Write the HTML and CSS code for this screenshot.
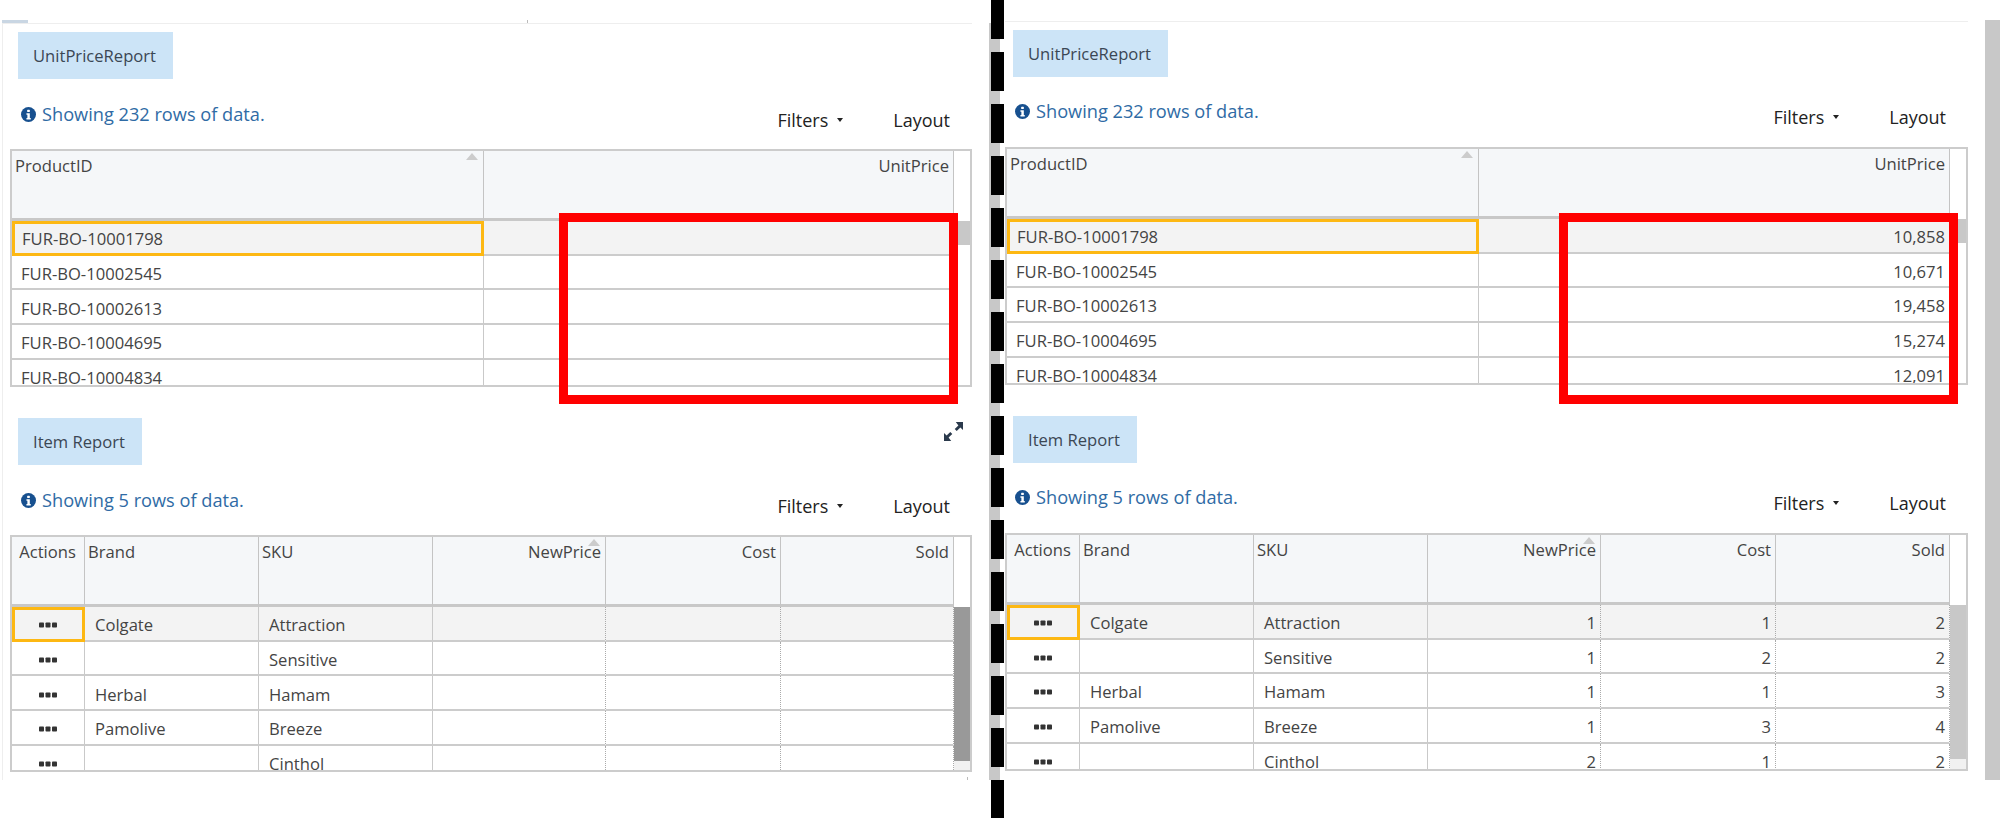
FILE: index.html

```html
<!DOCTYPE html>
<html lang="en">
<head>
  <meta charset="UTF-8" />
  <title>UnitPriceReport before and after</title>
  <link rel="stylesheet" href="styles.css">
</head>
<body>
  <svg class="defs" width="0" height="0">
    <symbol id="info" viewBox="0 0 16 16">
      <circle cx="8" cy="8" r="8" fill="#17508f"/>
      <rect x="6.6" y="2.8" width="2.8" height="2.6" rx="0.6" fill="#fff"/>
      <path d="M5.8 6.6h3.6v5h1v1.7H5.8v-1.7h1v-3.3h-1z" fill="#fff"/>
    </symbol>
    <symbol id="dots" viewBox="0 0 18 6">
      <rect x="0" y="0.5" width="5" height="5" rx="0.8"/>
      <rect x="6.5" y="0.5" width="5" height="5" rx="0.8"/>
      <rect x="13" y="0.5" width="5" height="5" rx="0.8"/>
    </symbol>
  </svg>

  <main class="page">

    <section class="pane pane-before">
      <div class="sheet">
        <span class="tab-mark"></span>
        <span class="top-tick"></span>
        <span class="bottom-tick"></span>

        <div class="report report-first">
          <div class="report-head">
            <h2 class="chip">UnitPriceReport</h2>
          </div>
          <div class="toolbar">
            <p class="info"><svg class="info-icon"><use href="#info"/></svg>Showing 232 rows of data.</p>
            <div class="tools"><span class="filters">Filters</span><span class="caret"></span><span class="layout">Layout</span></div>
          </div>
          <div class="frame">
            <div class="grid cols-price">
              <div class="th">ProductID<span class="sort"></span></div>
              <div class="th right">UnitPrice</div>

              <div class="td first sel focus">FUR-BO-10001798</div>
              <div class="td right sel"></div>
              <div class="td first">FUR-BO-10002545</div>
              <div class="td right"></div>
              <div class="td first">FUR-BO-10002613</div>
              <div class="td right"></div>
              <div class="td first">FUR-BO-10004695</div>
              <div class="td right"></div>
              <div class="td first">FUR-BO-10004834</div>
              <div class="td right"></div>
            </div>
            <div class="scroll"><div class="thumb thumb-short"></div></div>
          </div>
        </div>

        <div class="report">
          <div class="report-head">
            <h2 class="chip">Item Report</h2>
            <svg class="expand" viewBox="0 0 19 19">
              <path d="M19 0v8l-2.6-2.6-3.7 3.7-2-2 3.7-3.7L11.8 0z" fill="#2b3a4c"/>
              <path d="M0 19v-8l2.6 2.6 3.7-3.7 2 2-3.7 3.7L7.2 19z" fill="#2b3a4c"/>
            </svg>
          </div>
          <div class="toolbar">
            <p class="info"><svg class="info-icon"><use href="#info"/></svg>Showing 5 rows of data.</p>
            <div class="tools"><span class="filters">Filters</span><span class="caret"></span><span class="layout">Layout</span></div>
          </div>
          <div class="frame frame-item">
            <div class="grid cols-item">
              <div class="th center">Actions</div>
              <div class="th">Brand</div>
              <div class="th">SKU</div>
              <div class="th right">NewPrice<span class="sort"></span></div>
              <div class="th right">Cost</div>
              <div class="th right">Sold</div>

              <div class="td action sel focus"><svg class="dots"><use href="#dots"/></svg></div>
              <div class="td sel">Colgate</div>
              <div class="td sel">Attraction</div>
              <div class="td right dotted sel"></div>
              <div class="td right dotted sel"></div>
              <div class="td right dotted sel"></div>

              <div class="td action"><svg class="dots"><use href="#dots"/></svg></div>
              <div class="td"></div>
              <div class="td">Sensitive</div>
              <div class="td right dotted"></div>
              <div class="td right dotted"></div>
              <div class="td right dotted"></div>

              <div class="td action"><svg class="dots"><use href="#dots"/></svg></div>
              <div class="td">Herbal</div>
              <div class="td">Hamam</div>
              <div class="td right dotted"></div>
              <div class="td right dotted"></div>
              <div class="td right dotted"></div>

              <div class="td action"><svg class="dots"><use href="#dots"/></svg></div>
              <div class="td">Pamolive</div>
              <div class="td">Breeze</div>
              <div class="td right dotted"></div>
              <div class="td right dotted"></div>
              <div class="td right dotted"></div>

              <div class="td action"><svg class="dots"><use href="#dots"/></svg></div>
              <div class="td"></div>
              <div class="td">Cinthol</div>
              <div class="td right dotted"></div>
              <div class="td right dotted"></div>
              <div class="td right dotted"></div>
            </div>
            <div class="scroll scroll-track"><div class="thumb thumb-long thumb-dark"></div></div>
          </div>
        </div>
      </div>
      <div class="red-box"></div>
    </section>

    <div class="divider"></div>

    <section class="pane pane-after">
      <div class="sheet">

        <div class="report report-first">
          <div class="report-head">
            <h2 class="chip">UnitPriceReport</h2>
          </div>
          <div class="toolbar">
            <p class="info"><svg class="info-icon"><use href="#info"/></svg>Showing 232 rows of data.</p>
            <div class="tools"><span class="filters">Filters</span><span class="caret"></span><span class="layout">Layout</span></div>
          </div>
          <div class="frame">
            <div class="grid cols-price">
              <div class="th">ProductID<span class="sort"></span></div>
              <div class="th right">UnitPrice</div>

              <div class="td first sel focus">FUR-BO-10001798</div>
              <div class="td right sel">10,858</div>
              <div class="td first">FUR-BO-10002545</div>
              <div class="td right">10,671</div>
              <div class="td first">FUR-BO-10002613</div>
              <div class="td right">19,458</div>
              <div class="td first">FUR-BO-10004695</div>
              <div class="td right">15,274</div>
              <div class="td first">FUR-BO-10004834</div>
              <div class="td right">12,091</div>
            </div>
            <div class="scroll"><div class="thumb thumb-short"></div></div>
          </div>
        </div>

        <div class="report">
          <div class="report-head">
            <h2 class="chip">Item Report</h2>
          </div>
          <div class="toolbar">
            <p class="info"><svg class="info-icon"><use href="#info"/></svg>Showing 5 rows of data.</p>
            <div class="tools"><span class="filters">Filters</span><span class="caret"></span><span class="layout">Layout</span></div>
          </div>
          <div class="frame">
            <div class="grid cols-item">
              <div class="th center">Actions</div>
              <div class="th">Brand</div>
              <div class="th">SKU</div>
              <div class="th right">NewPrice<span class="sort"></span></div>
              <div class="th right">Cost</div>
              <div class="th right">Sold</div>

              <div class="td action sel focus"><svg class="dots"><use href="#dots"/></svg></div>
              <div class="td sel">Colgate</div>
              <div class="td sel">Attraction</div>
              <div class="td right dotted sel">1</div>
              <div class="td right dotted sel">1</div>
              <div class="td right dotted sel">2</div>

              <div class="td action"><svg class="dots"><use href="#dots"/></svg></div>
              <div class="td"></div>
              <div class="td">Sensitive</div>
              <div class="td right dotted">1</div>
              <div class="td right dotted">2</div>
              <div class="td right dotted">2</div>

              <div class="td action"><svg class="dots"><use href="#dots"/></svg></div>
              <div class="td">Herbal</div>
              <div class="td">Hamam</div>
              <div class="td right dotted">1</div>
              <div class="td right dotted">1</div>
              <div class="td right dotted">3</div>

              <div class="td action"><svg class="dots"><use href="#dots"/></svg></div>
              <div class="td">Pamolive</div>
              <div class="td">Breeze</div>
              <div class="td right dotted">1</div>
              <div class="td right dotted">3</div>
              <div class="td right dotted">4</div>

              <div class="td action"><svg class="dots"><use href="#dots"/></svg></div>
              <div class="td"></div>
              <div class="td">Cinthol</div>
              <div class="td right dotted">2</div>
              <div class="td right dotted">1</div>
              <div class="td right dotted">2</div>
            </div>
            <div class="scroll scroll-track"><div class="thumb thumb-long"></div></div>
          </div>
        </div>
      </div>
      <div class="red-box"></div>
    </section>

  </main>
</body>
</html>
```

FILE: styles.css

```css
* {
  box-sizing: border-box;
}

body {
  margin: 0;
  background: #fff;
  color: #444;
  font-family: "Open Sans", "Noto Sans", sans-serif;
  font-size: 16.6px;
  line-height: 22px;
  overflow: hidden;
}

.defs {
  position: absolute;
}

.page {
  display: flex;
  width: 2000px;
  height: 818px;
}

/* the two captures, side by side */
.pane {
  position: relative;
  height: 780px;
}

.pane-before {
  width: 989px;
  padding: 23px 17px 0 2px;
}

.pane-after {
  width: 995px;
  padding: 21px 32px 0 0;
  background: linear-gradient(#c8c8c8, #c8c8c8) right 20px / 15px 760px no-repeat;
}

.divider {
  width: 16px;
  height: 818px;
  background:
    repeating-linear-gradient(#000 0 39px, transparent 39px 52px) 2px 0 / 13px 100% no-repeat,
    linear-gradient(#c8c8c8, #c8c8c8) 0 23px / 11px 757px no-repeat;
}

.sheet {
  height: 100%;
  border-top: 1px solid #eee;
}

.pane-before .sheet {
  padding-left: 7px;
  border-left: 1px solid #eee;
}

.tab-mark {
  position: absolute;
  left: 2px;
  top: 20px;
  width: 26px;
  height: 3px;
  background: #c9d6e3;
}

.top-tick {
  position: absolute;
  left: 527px;
  top: 20px;
  width: 1px;
  height: 3px;
  background: #bbb;
}

.bottom-tick {
  position: absolute;
  left: 967px;
  top: 777px;
  width: 1px;
  height: 3px;
  background: #bbb;
}

.report {
  margin-top: 31px;
}

.report-first {
  margin-top: 8px;
}

.report-head {
  display: flex;
  justify-content: space-between;
  align-items: flex-start;
}

.chip {
  margin: 0 0 0 8px;
  padding: 0 17px 0 15px;
  height: 47px;
  display: flex;
  align-items: center;
  background: #cce4f7;
  color: #3b4754;
  font-size: 16.6px;
  font-weight: 400;
}

.expand {
  width: 19px;
  height: 19px;
  margin: 4px 9px 0 0;
}

.toolbar {
  display: flex;
  justify-content: space-between;
  align-items: flex-start;
  height: 70px;
  padding-right: 22px;
}

.info {
  display: flex;
  align-items: center;
  margin: 24px 0 0 11px;
  color: #2f6ba5;
  font-size: 18.2px;
}

.pane-after .info {
  margin: 23px 0 0 10px;
}

.info-icon {
  width: 15px;
  height: 15px;
  margin-right: 6px;
}

.tools {
  display: flex;
  align-items: center;
  margin-top: 30px;
  color: #222;
  font-size: 18px;
}

.pane-after .tools {
  margin-top: 29px;
}

.caret {
  width: 0;
  height: 0;
  margin: 0 0 0 9px;
  border-left: 3.5px solid transparent;
  border-right: 3.5px solid transparent;
  border-top: 4px solid #222;
}

.layout {
  margin-left: 50px;
}

/* grid */
.frame {
  display: flex;
  height: 238px;
  border: 2px solid #ccc;
  overflow: hidden;
}

.frame-item {
  height: 237px;
}

.grid {
  flex: 1;
  display: grid;
  grid-auto-rows: 34.7px;
  grid-template-rows: 70px;
  align-content: start;
}

.cols-price {
  grid-template-columns: 472px 1fr;
}

.cols-item {
  grid-template-columns: 73px 174px 174px 173px 175px 1fr;
}

.th {
  position: relative;
  padding: 4px 4px 0 3px;
  background: #f5f7f9;
  border-right: 1px solid #c4c4c4;
  border-bottom: 3px solid #c8c8c8;
}

.td {
  display: flex;
  align-items: center;
  padding: 4px 10px 0;
  border-right: 1px solid #c9c9c9;
  border-bottom: 2px solid #ccc;
}

.pane-after .td {
  padding-top: 3px;
}

.td.first {
  padding-left: 9px;
}

.th.right {
  text-align: right;
}

.th.center {
  text-align: center;
}

.td.right {
  justify-content: flex-end;
  padding-right: 4px;
}

.td.dotted {
  border-right: 1px dotted #aaa;
}

.td.sel {
  background: #f3f3f3;
}

.td.focus {
  outline: 3px solid #fdb813;
  outline-offset: -3px;
}

.td.first.focus {
  padding-left: 10px;
}

.td.action {
  justify-content: center;
}

.dots {
  width: 18px;
  height: 6px;
  fill: #333;
}

.sort {
  position: absolute;
  right: 5px;
  top: 2px;
  width: 0;
  height: 0;
  border-left: 6.5px solid transparent;
  border-right: 6.5px solid transparent;
  border-bottom: 7px solid #ccc;
}

.scroll {
  width: 16px;
  padding-top: 70px;
}

.scroll-track {
  background: linear-gradient(#f1f1f1, #f1f1f1) 0 70px no-repeat;
}

.thumb {
  background: #c8c8c8;
}

.thumb-short {
  height: 24px;
}

.thumb-long {
  height: 154px;
}

.thumb-dark {
  background: #999;
}

/* annotation drawn over the grids */
.red-box {
  position: absolute;
  top: 213px;
  width: 399px;
  height: 191px;
  border: 9px solid #f00;
}

.pane-before .red-box {
  left: 559px;
}

.pane-after .red-box {
  left: 554px;
}
```
